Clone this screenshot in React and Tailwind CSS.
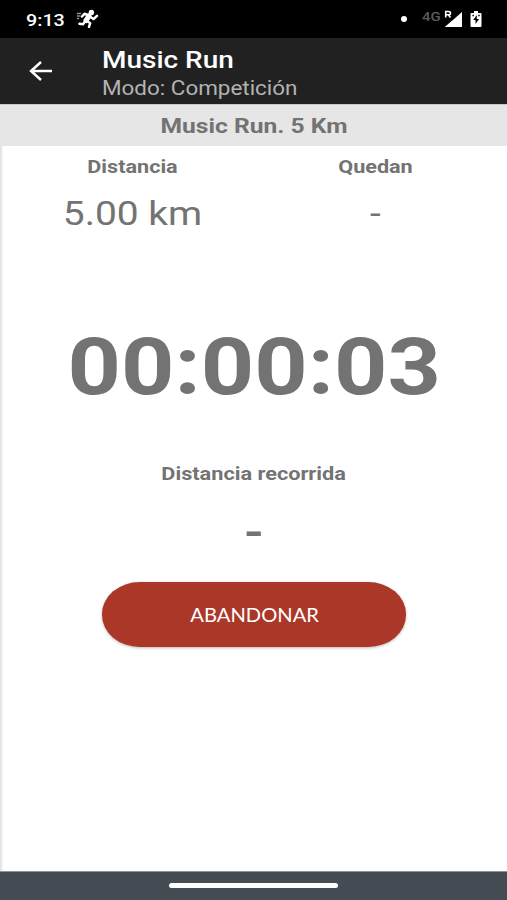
function StatusBar() {
  return (
    <div className="flex h-[38px] items-center bg-black pl-[26px] pr-[25px] text-white">
      <span className="w-[50px] text-[17px] font-medium leading-[38px]">
        <span className="inline-block origin-left translate-y-px scale-x-[1.16]">9:13</span>
      </span>
      <svg width="24" height="20" viewBox="0 0 24 20" fill="none" stroke="#fff" strokeLinecap="round" strokeLinejoin="round">
        <circle cx="15.400" cy="3.500" r="2.700" fill="#fff" stroke="none" />
        <path d="M13 7 10 11.500" strokeWidth="5" />
        <path d="M12.400 6.200 8.400 4.800 6 7.500M14.500 8l3 2L21 6.800M11 12l3.200 2.200-1.200 3.600M9 12.500 7 15.200 3.500 14.800" strokeWidth="2.500" />
        <path d="M1.500 4.500h3M1.500 7h2.400M1.500 9.500h2" strokeWidth="1.400" strokeDasharray="1 1.200" opacity=".6" />
      </svg>
      <span className="ml-auto size-[6px] rounded-full bg-white" />
      <span className="ml-[15px] w-[21px] self-start text-[12px] font-medium leading-[34px] text-[#5c5c5c]">
        <span className="inline-block origin-left scale-x-[1.24]">4G</span>
      </span>
      <svg className="ml-px" width="19" height="20" viewBox="0 0 19 20">
        <path d="M18 3v15H1Z" fill="#fff" />
        <path d="M0 0h8.500v9.500H0Z" fill="#000" />
        <path d="M1.700 8.500V2.500h2.800c2.600 0 2.600 3.300 0 3.300H1.700M4.400 5.800 6.400 8.500" fill="none" stroke="#fff" strokeWidth="1.600" />
        <path d="M1 18 8.500 11.400V18Z" fill="#fff" />
      </svg>
      <svg className="ml-[7px]" width="12" height="18" viewBox="0 0 12 18">
        <path d="M4 1h4v2h2.500q1 0 1 1v12q0 1-1 1h-9q-1 0-1-1V4q0-1 1-1H4Z" fill="#fff" />
        <path d="M6.800 5 3.200 10h2.300v4l3.600-5H6.800Z" fill="#000" />
        <path d="M2.400 5.500h1.400M8.300 5.500h1.400" stroke="#000" strokeWidth="1.300" />
      </svg>
    </div>
  );
}

function Header() {
  return (
    <header className="flex h-[66px] bg-[#212121] pl-[28px]">
      <svg className="mt-[22px]" width="24" height="22" viewBox="0 0 24 22" fill="none" stroke="#fff" strokeWidth="2.400">
        <path d="M13 2 3 11l10 9M3 11h21" />
      </svg>
      <div className="ml-[50px] pt-[8px]">
        <h1 className="origin-left scale-x-[1.165] whitespace-nowrap text-[24px] font-medium leading-[28px] text-white">Music Run</h1>
        <p className="origin-left scale-x-[1.15] whitespace-nowrap text-[19.500px] leading-[29px] text-[#b3b3b3]">Modo: Competición</p>
      </div>
    </header>
  );
}

export default function App() {
  return (
    <div className="flex h-[900px] w-[507px] flex-col overflow-hidden bg-white font-['Roboto',sans-serif] text-[#737373]">
      <StatusBar />
      <Header />
      <main className="flex flex-1 flex-col items-center bg-white pl-px shadow-[inset_3px_0_2px_-1px_#e2e2e2]">
        <div className="-ml-px flex h-[42px] w-[507px] justify-center border-t border-[#c8c8c8] bg-[#e6e6e6] pl-[2px]">
          <h2 className="scale-x-[1.23] text-[20px] font-bold leading-[42px]">Music Run. 5 Km</h2>
        </div>
        <div className="-ml-px grid w-[507px] grid-cols-[243px_243px] justify-center text-center">
          <section>
            <h3 className="scale-x-[1.2] text-[18px] font-bold leading-[41px]">Distancia</h3>
            <p className="scale-x-[1.18] text-[33px] leading-[54px]">5.00 km</p>
          </section>
          <section>
            <h3 className="scale-x-[1.2] text-[18px] font-bold leading-[41px]">Quedan</h3>
            <p className="scale-x-[1.18] text-[33px] leading-[54px]">-</p>
          </section>
        </div>
        <div className="mt-[76px] scale-x-[1.18] text-[79px] font-bold leading-[100px]">00:00:03</div>
        <h3 className="mt-[37px] scale-x-[1.205] text-[18px] font-bold leading-[40px]">Distancia recorrida</h3>
        <div className="mt-[9px] scale-x-[1.28] text-[40px] font-bold leading-[60px]">-</div>
        <button className="mt-[19px] flex h-[65px] w-[304px] items-center justify-center rounded-[38px/32px] bg-[#aa3728] pl-px pt-[2px] font-['Lato',sans-serif] text-[19px] text-white shadow-[0_1px_3px_#bbb]">
          <span className="scale-x-[1.06]">ABANDONAR</span>
        </button>
      </main>
      <nav className="flex h-[29px] justify-center border-t border-[#8e9495] bg-[#454c53] pt-[11px]">
        <span className="h-[5px] w-[169px] rounded-full bg-white" />
      </nav>
    </div>
  );
}
